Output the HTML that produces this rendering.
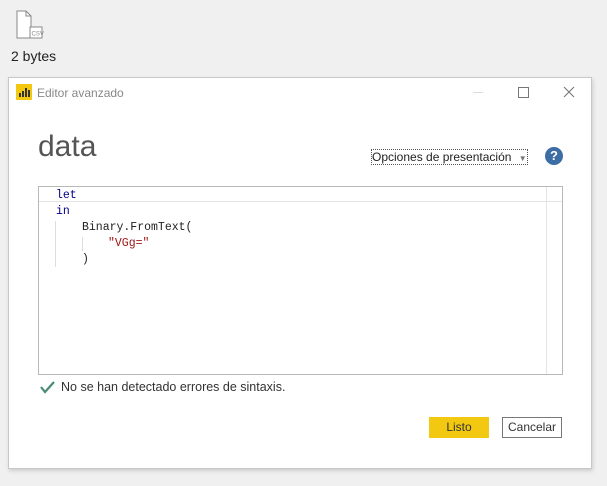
<!DOCTYPE html>
<html><head><style>
body{margin:0;width:607px;height:486px;background:#f0f0f0;position:relative;overflow:hidden;font-family:"Liberation Sans",sans-serif;}
.a{position:absolute}
.mono{font-family:"Liberation Mono",monospace;font-size:11.5px;}
</style></head><body>
<svg class="a" style="left:14px;top:10px" width="32" height="32" viewBox="0 0 32 32">
<path d="M3 1H12L17 6V28H3Z" fill="#fff" stroke="#888"/>
<path d="M12 1V6H17" fill="none" stroke="#888"/>
<rect x="16" y="17" width="12" height="11" fill="#fff" stroke="#888"/>
<text x="17.5" y="25.5" font-size="6" fill="#888" font-family="Liberation Sans">CSV</text>
</svg>
<div class="a" style="left:11px;top:48px;font-size:14px;color:#222">2 bytes</div>
<div class="a" style="left:8px;top:77px;width:584px;height:392px;background:#fff;border:1px solid #c8c8c8;box-sizing:border-box;box-shadow:1px 2px 4px rgba(0,0,0,0.15)"></div>
<div class="a" style="left:16px;top:84px;width:16px;height:16px;background:#f2c811"></div>
<div class="a" style="left:19px;top:93px;width:2px;height:4px;background:#333"></div>
<div class="a" style="left:22px;top:91px;width:2px;height:6px;background:#333"></div>
<div class="a" style="left:25px;top:88px;width:2px;height:9px;background:#333"></div>
<div class="a" style="left:28px;top:90px;width:2px;height:7px;background:#333"></div>
<div class="a" style="left:37px;top:86px;font-size:12px;color:#888">Editor avanzado</div>
<div class="a" style="left:473px;top:92px;width:10px;height:1px;background:#ddd"></div>
<div class="a" style="left:518px;top:87px;width:9px;height:9px;border:1px solid #777"></div>
<svg class="a" style="left:563px;top:86px" width="12" height="12"><path d="M1 1L11 11M11 1L1 11" stroke="#777" stroke-width="1.1"/></svg>
<div class="a" style="left:38px;top:130px;font-size:30px;color:#555">data</div>
<div class="a" style="left:371px;top:149px;width:155px;height:14px;border:1px dotted #555;font-size:12px;color:#222;line-height:14px">Opciones de presentación <span style="font-size:8px;color:#777;margin-left:4px">▼</span></div>
<div class="a" style="left:545px;top:147px;width:18px;height:18px;border-radius:50%;background:#3c6ea5;color:#fff;font-weight:bold;font-size:13px;text-align:center;line-height:18px">?</div>
<div class="a" style="left:38px;top:186px;width:525px;height:189px;border:1px solid #b8b8b8;box-sizing:border-box"></div>
<div class="a" style="left:39px;top:201px;width:508px;height:1px;background:#e4e4e4"></div>
<div class="a" style="left:546px;top:187px;width:1px;height:187px;background:#e4e4e4"></div>
<div class="a" style="left:547px;top:201px;width:15px;height:1px;background:#e4e4e4"></div>
<div class="a" style="left:55px;top:221px;width:1px;height:46px;background:#ddd"></div>
<div class="a" style="left:82px;top:237px;width:1px;height:14px;background:#ddd"></div>
<div class="a mono" style="left:56px;top:189px;color:#00008b">let</div>
<div class="a mono" style="left:56px;top:205px;color:#00008b">in</div>
<div class="a mono" style="left:82px;top:221px;color:#222">Binary.FromText(</div>
<div class="a mono" style="left:108px;top:237px;color:#a31515">"VGg="</div>
<div class="a mono" style="left:82px;top:253px;color:#222">)</div>
<svg class="a" style="left:40px;top:380px" width="16" height="14"><path d="M1 7L5 12L14 2" fill="none" stroke="#4a8a78" stroke-width="2.2"/></svg>
<div class="a" style="left:61px;top:380px;font-size:12.5px;color:#333">No se han detectado errores de sintaxis.</div>
<div class="a" style="left:429px;top:417px;width:60px;height:21px;background:#f2c811;font-size:12px;color:#333;text-align:center;line-height:21px">Listo</div>
<div class="a" style="left:502px;top:417px;width:60px;height:21px;border:1px solid #777;box-sizing:border-box;font-size:12px;color:#333;text-align:center;line-height:19px">Cancelar</div>
</body></html>
